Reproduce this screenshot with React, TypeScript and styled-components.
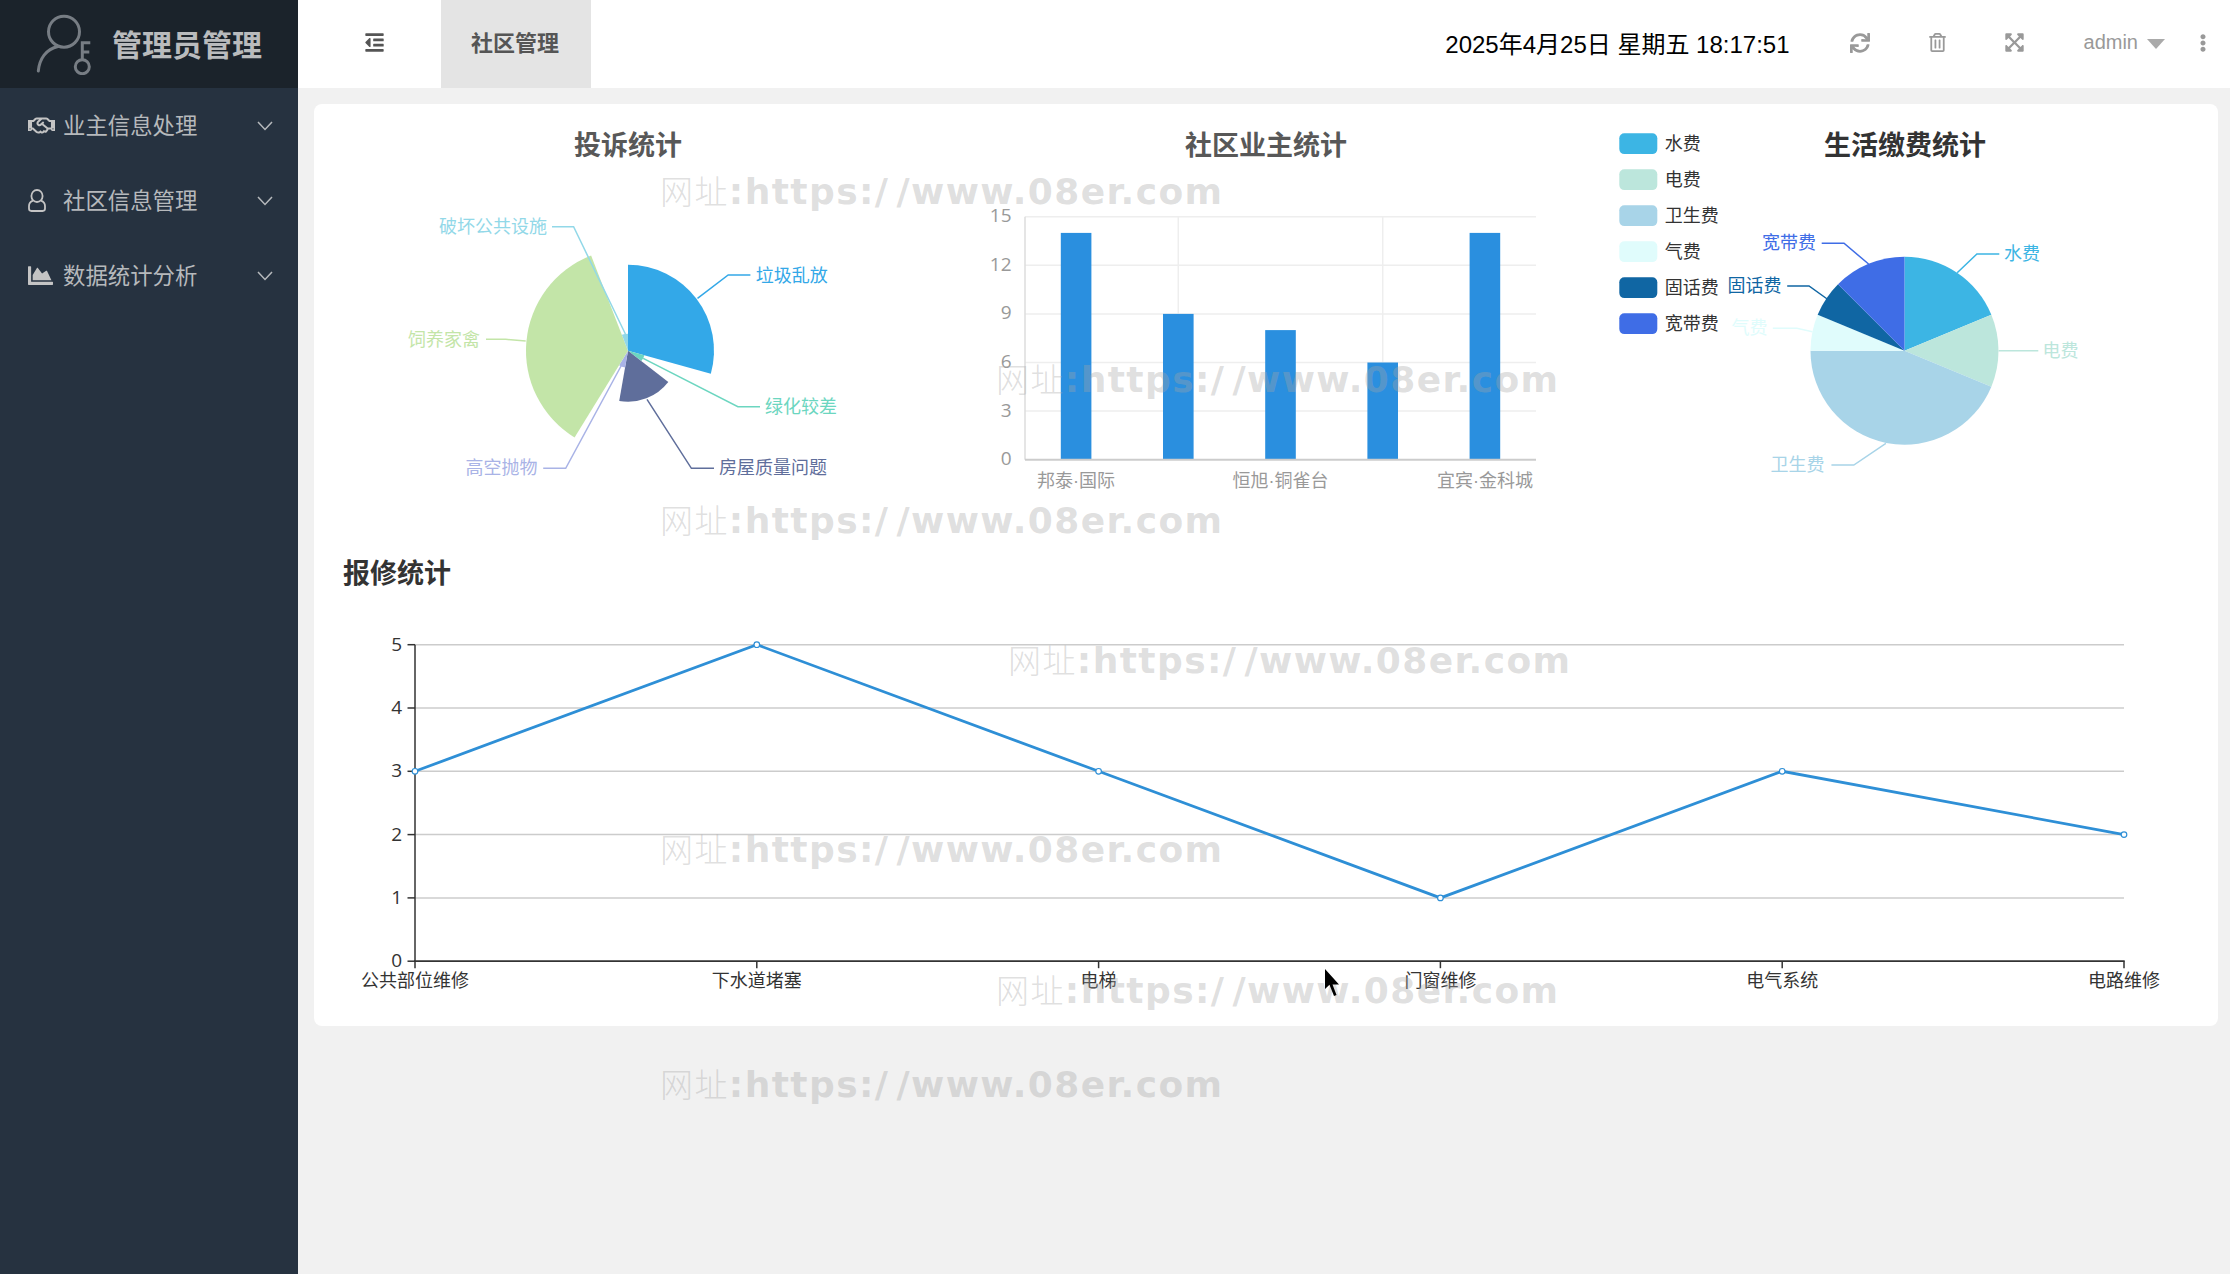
import React from 'react';
import styled, { createGlobalStyle } from 'styled-components';
import { FaRegHandshake, FaChartArea, FaOutdent, FaSync, FaRegTrashAlt, FaExpandArrowsAlt, FaEllipsisV } from 'react-icons/fa';

const FONT = '"Liberation Sans", "Noto Sans CJK SC", sans-serif';

const Global = createGlobalStyle`
  html, body { margin: 0; padding: 0; background: #f1f1f1; }
  body { font-family: ${FONT}; }
  * { box-sizing: border-box; }
`;

const Page = styled.div`
  position: relative;
  display: grid;
  grid-template-columns: 298px 1fr;
  width: 2230px;
  height: 1274px;
  overflow: hidden;
  background: #f1f1f1;
`;
const Sidebar = styled.aside`
  background: #263240;
  display: flex;
  flex-direction: column;
`;
const Brand = styled.div`
  height: 88px;
  background: #1b232b;
  display: flex;
  align-items: center;
  padding-left: 36px;
  gap: 20px;
`;
const BrandName = styled.span`
  font-size: 30px;
  font-weight: 700;
  color: #b9bbbd;
  padding-bottom: 3px;
`;
const MenuItem = styled.div`
  height: 75px;
  display: flex;
  align-items: center;
  padding: 0 25px 0 28px;
  color: #b6b9bc;
  font-size: 22.4px;
`;
const MenuIcon = styled.span`
  width: 35px;
  display: flex;
  align-items: center;
  color: #c4c4c4;
`;
const MenuLabel = styled.span`
  flex: 1;
  padding-bottom: 4px;
`;
const Main = styled.div`
  display: flex;
  flex-direction: column;
  min-width: 0;
`;
const Header = styled.header`
  height: 88px;
  background: #fff;
  display: flex;
  align-items: center;
`;
const Toggle = styled.div`
  width: 143px;
  height: 100%;
  display: flex;
  align-items: center;
  padding: 0 0 3px 66px;
  color: #555;
`;
const Tab = styled.div`
  width: 150px;
  height: 100%;
  background: #e4e4e4;
  color: #555;
  font-size: 22px;
  font-weight: 700;
  display: flex;
  align-items: center;
  justify-content: center;
  padding: 0 2px 7px 0;
`;
const Clock = styled.div`
  margin-left: auto;
  margin-right: 32px;
  padding-bottom: 4px;
  color: #000;
  font-size: 24px;
  white-space: pre;
`;
const ToolButton = styled.div<{ $w: number }>`
  width: ${p => p.$w}px;
  height: 100%;
  display: flex;
  align-items: center;
  justify-content: center;
  padding-bottom: 3px;
  color: #999;
`;
const User = styled.div`
  display: flex;
  align-items: center;
  gap: 9px;
  height: 100%;
  padding: 0 11px 3px 31px;
  color: #999;
  font-size: 20px;
`;
const Caret = styled.span`
  width: 0;
  height: 0;
  border-left: 9px solid transparent;
  border-right: 9px solid transparent;
  border-top: 10px solid #aaa;
  margin-top: 2px;
`;
const Content = styled.main`
  padding: 16px 12px 0 16px;
`;
const Card = styled.section`
  height: 922px;
  background: #fff;
  border-radius: 8px;
`;
const ChartRow = styled.div`
  display: grid;
  grid-template-columns: repeat(3, 628px);
  gap: 10px;
  height: 430px;
`;
const Canvas = styled.svg`
  display: block;
  font-family: ${FONT};
`;
const ChartTitle = styled.text<{ $dark?: boolean }>`
  font-size: 27px;
  font-weight: 700;
  fill: ${p => (p.$dark ? '#333' : '#585858')};
  text-anchor: middle;
  dominant-baseline: central;
`;
const Label = styled.text`
  font-size: 18px;
  dominant-baseline: central;
`;
const TickLabel = styled.text`
  font-family: "Open Sans", sans-serif;
  font-size: 19px;
  text-anchor: end;
  dominant-baseline: central;
`;
const SectionTitle = styled.h2`
  margin: 24px 0 0;
  padding-left: 29px;
  font-size: 27px;
  line-height: 33px;
  font-weight: 700;
  color: #333;
`;
const Watermark = styled.div<{ $x: number; $y: number }>`
  position: absolute;
  left: ${p => p.$x}px;
  top: ${p => p.$y}px;
  font-family: "DejaVu Sans", "Noto Sans CJK SC", sans-serif;
  font-size: 36px;
  line-height: 40px;
  font-weight: 700;
  letter-spacing: 1.42px;
  color: rgba(165, 165, 165, 0.36);
  white-space: nowrap;
  pointer-events: none;
`;
const WatermarkCjk = styled.span`
  font-family: "Noto Sans CJK SC", sans-serif;
  font-size: 33px;
  font-weight: 300;
`;
const WatermarkSlash = styled.span`
  margin-left: 7px;
`;
const Cursor = styled.svg`
  position: absolute;
  left: 1324px;
  top: 968px;
  pointer-events: none;
`;

const rad = (d: number) => ((d - 90) * Math.PI) / 180;
const slice = (cx: number, cy: number, r: number, a: number, b: number) => {
  const p = (d: number) => `${(cx + r * Math.cos(rad(d))).toFixed(2)} ${(cy + r * Math.sin(rad(d))).toFixed(2)}`;
  return `M${cx} ${cy}L${p(a)}A${r} ${r} 0 ${b - a > 180 ? 1 : 0} 1 ${p(b)}Z`;
};

type Lbl = { t: string; c: string; a: number; b: number; r: number; line: string; x: number; y: number; end?: boolean };

const complaint: Lbl[] = [
  { t: '垃圾乱放', c: '#33a8e8', a: 0, b: 105.6, r: 86, line: '697.5,298.3 728.2,275 750.4,275', x: 755.7, y: 275.5 },
  { t: '绿化较差', c: '#6cd6c0', a: 105.6, b: 127.8, r: 17, line: '643.2,358.3 737.9,406.7 760,406.7', x: 765, y: 407 },
  { t: '房屋质量问题', c: '#5f6e9b', a: 127.8, b: 189.9, r: 51, line: '647,399.3 691.4,468.3 714,468.3', x: 719, y: 468.3 },
  { t: '高空抛物', c: '#a9b3e6', a: 189.9, b: 211.6, r: 17, line: '625.4,358 565.7,468.3 543.2,468.3', x: 537.5, y: 468.3, end: true },
  { t: '饲养家禽', c: '#c3e5a8', a: 211.6, b: 338.8, r: 102, line: '525.7,341 505.7,339.3 486,339.3', x: 480, y: 339.8, end: true },
  { t: '破坏公共设施', c: '#92d8e8', a: 338.8, b: 360, r: 17, line: '625.4,334 573.6,226.7 552,226.7', x: 547, y: 226.7, end: true },
];

const bills: Lbl[] = [
  { t: '水费', c: '#3cb5e4', a: 0, b: 67.5, r: 94, line: '1957.2,272.7 1976.9,254 1999.3,254', x: 2004, y: 254 },
  { t: '电费', c: '#bce6dc', a: 67.5, b: 112.5, r: 94, line: '1998.6,350.7 2038.3,350.7', x: 2042.5, y: 350.7 },
  { t: '卫生费', c: '#a8d4e8', a: 112.5, b: 270, r: 94, line: '1885.9,443.3 1853.8,465 1831.4,465', x: 1824.5, y: 465, end: true },
  { t: '气费', c: '#e0fcfc', a: 270, b: 292.5, r: 94, line: '1812.4,331.7 1796.9,328.3 1772.8,328.3', x: 1767.6, y: 328.3, end: true },
  { t: '固话费', c: '#1066a3', a: 292.5, b: 315, r: 94, line: '1827.2,299 1809,286 1787.2,286', x: 1781.4, y: 286, end: true },
  { t: '宽带费', c: '#3f6de6', a: 315, b: 360, r: 94, line: '1868.6,264 1844,243.3 1821.7,243.3', x: 1816, y: 243.3, end: true },
];

const Pie = ({ items, cx, cy }: { items: Lbl[]; cx: number; cy: number }) => (
  <>
    {items.map(s => (
      <g key={s.t}>
        <path d={slice(cx, cy, s.r, s.a, s.b)} fill={s.c} />
        <polyline points={s.line} fill="none" stroke={s.c} strokeWidth={1.5} />
        <Label x={s.x} y={s.y} fill={s.c} textAnchor={s.end ? 'end' : 'start'}>{s.t}</Label>
      </g>
    ))}
  </>
);

const barY0 = 459.7;
const barUnit = 16.2;
const barX0 = 1025;
const barStep = 102.2;
const owners = [14, 9, 8, 6, 14];
const ownerLabels: [number, string][] = [[0, '邦泰·国际'], [2, '恒旭·铜雀台'], [4, '宜宾·金科城']];

const lineXs = [415, 756.8, 1098.6, 1440.4, 1782.2, 2124];
const lineVals = [3, 5, 3, 1, 3, 2];
const lineNames = ['公共部位维修', '下水道堵塞', '电梯', '门窗维修', '电气系统', '电路维修'];
const lineY = (v: number) => 961.2 - v * 63.3;

const Chevron = () => (
  <svg width="16" height="10" viewBox="0 0 16 10"><path d="M1 1l7 7.5L15 1" fill="none" stroke="#b6b9bc" strokeWidth="1.5" /></svg>
);

const menu = [
  { t: '业主信息处理', i: <FaRegHandshake size={27} /> },
  {
    t: '社区信息管理',
    i: (
      <svg width="18" height="23" viewBox="0 0 18 23" fill="none" stroke="#c4c4c4" strokeWidth="1.8">
        <ellipse cx="9" cy="7" rx="5.6" ry="6" />
        <path d="M5 11.6C2.4 12.6 1 14.5 1 17v2.6C1 21 2 22 3.4 22h11.2c1.4 0 2.4-1 2.4-2.4V17c0-2.5-1.4-4.4-4-5.4" />
      </svg>
    ),
  },
  { t: '数据统计分析', i: <FaChartArea size={25} /> },
];

const marks: [number, number][] = [[660, 170], [996, 358], [660, 499], [1008, 639], [660, 828], [996, 969], [660, 1063]];

export default function App() {
  return (
    <Page>
      <Global />
      <Sidebar>
        <Brand>
          <svg width="56" height="62" viewBox="36 13 56 62" fill="none" stroke="#777d84" strokeWidth="3">
            <circle cx="64" cy="31.7" r="15.5" />
            <path d="M38.3 71C39.5 59 46 49 58 46.5" strokeLinecap="round" />
            <circle cx="82.3" cy="66.7" r="7" />
            <path d="M82.3 60V42.7h8M82.3 52h7" />
          </svg>
          <BrandName>管理员管理</BrandName>
        </Brand>
        {menu.map(m => (
          <MenuItem key={m.t}>
            <MenuIcon>{m.i}</MenuIcon>
            <MenuLabel>{m.t}</MenuLabel>
            <Chevron />
          </MenuItem>
        ))}
      </Sidebar>
      <Main>
        <Header>
          <Toggle><FaOutdent size={21} /></Toggle>
          <Tab>社区管理</Tab>
          <Clock>2025年4月25日 星期五 18:17:51</Clock>
          <ToolButton $w={77}><FaSync size={20} /></ToolButton>
          <ToolButton $w={77}><FaRegTrashAlt size={19} /></ToolButton>
          <ToolButton $w={77}><FaExpandArrowsAlt size={21} /></ToolButton>
          <User>admin<Caret /></User>
          <ToolButton $w={54}><FaEllipsisV size={18} /></ToolButton>
        </Header>
        <Content>
          <Card>
            <ChartRow>
              <Canvas width={628} height={430} viewBox="314 104 628 430">
                <ChartTitle x={628} y={146.3}>投诉统计</ChartTitle>
                <Pie items={complaint} cx={628} cy={350.7} />
              </Canvas>
              <Canvas width={628} height={430} viewBox="952 104 628 430">
                <ChartTitle x={1266} y={146.3}>社区业主统计</ChartTitle>
                {[15, 12, 9, 6, 3].map(v => (
                  <line key={v} x1={barX0} x2={1536} y1={barY0 - v * barUnit} y2={barY0 - v * barUnit} stroke="#eee" strokeWidth={1.5} />
                ))}
                {[1178.3, 1382.7].map(x => (
                  <line key={x} x1={x} x2={x} y1={216.7} y2={barY0} stroke="#eee" strokeWidth={1.5} />
                ))}
                <line x1={barX0} x2={barX0} y1={216.7} y2={barY0} stroke="#ddd" strokeWidth={1.5} />
                {owners.map((v, i) => (
                  <rect key={i} x={barX0 + barStep * (i + 0.5) - 15.3} y={barY0 - v * barUnit} width={30.6} height={v * barUnit} fill="#2a8fdf" />
                ))}
                <line x1={barX0} x2={1536} y1={barY0} y2={barY0} stroke="#ccc" strokeWidth={2} />
                {[0, 3, 6, 9, 12, 15].map(v => (
                  <TickLabel key={v} x={1011.5} y={barY0 - v * barUnit - 1.5} fill="#999">{v}</TickLabel>
                ))}
                {ownerLabels.map(([i, t]) => (
                  <Label key={t} x={barX0 + barStep * (i + 0.5)} y={480.5} fill="#999" textAnchor="middle">{t}</Label>
                ))}
              </Canvas>
              <Canvas width={628} height={430} viewBox="1590 104 628 430">
                <ChartTitle $dark x={1905} y={146.3}>生活缴费统计</ChartTitle>
                <Pie items={bills} cx={1904.5} cy={350.7} />
                {bills.map((s, i) => (
                  <g key={s.t}>
                    <rect x={1619.3} y={133.3 + i * 36} width={38} height={20.8} rx={5} fill={s.c} />
                    <Label x={1664.8} y={143.7 + i * 36} fill="#333">{s.t}</Label>
                  </g>
                ))}
              </Canvas>
            </ChartRow>
            <SectionTitle>报修统计</SectionTitle>
            <Canvas width={1904} height={435} viewBox="314 591 1904 435">
              {[1, 2, 3, 4, 5].map(v => (
                <line key={v} x1={415} x2={2124} y1={lineY(v)} y2={lineY(v)} stroke="#ccc" strokeWidth={1.5} />
              ))}
              <line x1={415} x2={415} y1={lineY(5)} y2={lineY(0)} stroke="#333" strokeWidth={1.5} />
              <line x1={414} x2={2124.7} y1={lineY(0)} y2={lineY(0)} stroke="#333" strokeWidth={1.8} />
              {[0, 1, 2, 3, 4, 5].map(v => (
                <g key={v}>
                  <line x1={407.5} x2={415} y1={lineY(v)} y2={lineY(v)} stroke="#333" strokeWidth={1.5} />
                  <TickLabel x={402} y={lineY(v) - 1} fill="#333">{v}</TickLabel>
                </g>
              ))}
              {lineXs.map((x, i) => (
                <g key={x}>
                  <line x1={x} x2={x} y1={lineY(0)} y2={lineY(0) + 7} stroke="#333" strokeWidth={1.5} />
                  <Label x={x} y={980.7} fill="#333" textAnchor="middle">{lineNames[i]}</Label>
                </g>
              ))}
              <polyline points={lineXs.map((x, i) => `${x},${lineY(lineVals[i])}`).join(' ')} fill="none" stroke="#2e8fd6" strokeWidth={2.8} />
              {lineXs.map((x, i) => (
                <circle key={x} cx={x} cy={lineY(lineVals[i])} r={2.8} fill="#fff" stroke="#2e8fd6" strokeWidth={1.2} />
              ))}
            </Canvas>
          </Card>
        </Content>
      </Main>
      {marks.map(([x, y], i) => (
        <Watermark key={i} $x={x} $y={y}><WatermarkCjk>网址</WatermarkCjk>:https:/<WatermarkSlash>/</WatermarkSlash>www.08er.com</Watermark>
      ))}
      <Cursor width="16" height="30" viewBox="0 0 16 30">
        <path d="M1 1v20l4.5-4.2L10 28l2.5-1-4-10.5H15z" fill="#000" />
      </Cursor>
    </Page>
  );
}
